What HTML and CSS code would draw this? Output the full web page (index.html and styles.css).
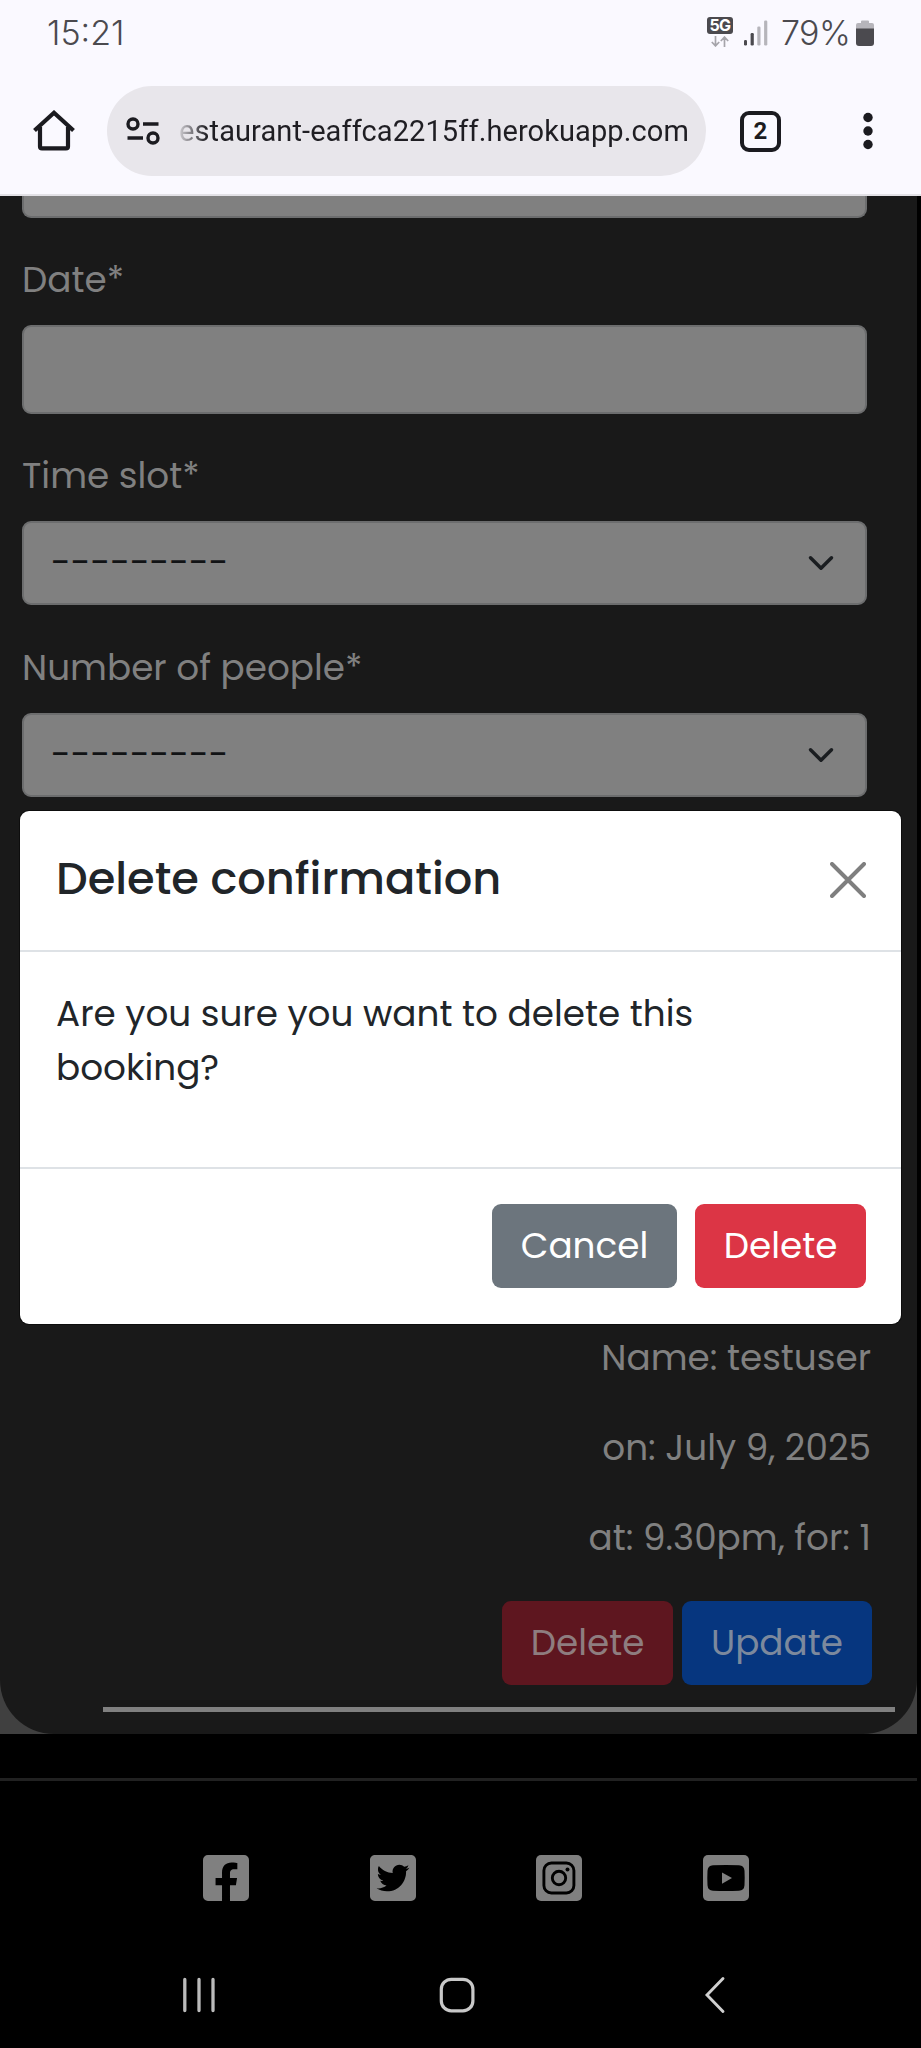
FILE: index.html
```html
<!DOCTYPE html>
<html lang="en">
<head>
<meta charset="utf-8">
<title>Bookings</title>
<link rel="stylesheet" href="styles.css">
</head>
<body>
<div class="phone">
  <header class="chrome">
    <div class="status">
      <span class="clock">15:21</span>
      <div class="status-right">
        <div class="net">
          <span class="net-badge">5G</span>
          <svg width="18" height="11" viewBox="0 0 18 11" fill="none" stroke="#a5a4aa" stroke-width="1.7"><path d="M4.500 0v9.600M.8 6l3.700 3.900L8.200 6M13.500 11V1.400M9.800 5l3.700-3.900L17.200 5"/></svg>
        </div>
        <svg class="bars" width="24" height="26" viewBox="0 0 24 26"><g fill="#4b4a4f"><rect y="20" width="3" height="5.500" rx="1.200"/><rect x="6.600" y="13" width="3.200" height="12.500" rx="1.200"/></g><g fill="#b6b5bb"><rect x="13.300" y="6.500" width="3.200" height="19" rx="1.200"/><rect x="20.100" y=".5" width="3.200" height="25" rx="1.200"/></g></svg>
        <span class="percent">79%</span>
        <svg class="battery" width="18" height="27" viewBox="0 0 18 27"><path d="M5 3V1.500Q5 .5 6 .5h6q1 0 1 1V3h3q2 0 2 2v4H0V5q0-2 2-2z" fill="#b6b5bb"/><path d="M0 8.500h18V23q0 3-3 3H3q-3 0-3-3z" fill="#4b4a4f"/></svg>
      </div>
    </div>
    <div class="toolbar">
      <svg class="home" width="42" height="42" viewBox="0 0 42 42" fill="none" stroke="#1b1b20" stroke-width="4.200"><path d="M1.500 20.500L21 2.800l19.500 17.700M7 17v19.400q0 2 2 2h24q2 0 2-2V17"/></svg>
      <div class="pill">
        <svg width="34" height="28" viewBox="0 0 34 28" fill="none" stroke="#1b1b20" stroke-width="3.400"><circle cx="7" cy="7" r="5"/><circle cx="27" cy="21" r="5"/><path d="M17 7h15.500M1.500 21H17"/></svg>
        <span class="url">estaurant-eaffca2215ff.herokuapp.com</span>
      </div>
      <span class="tabs">2</span>
      <svg class="dots" width="10" height="38" viewBox="0 0 10 38" fill="#1b1b20"><circle cx="5" cy="5.500" r="4.700"/><circle cx="5" cy="19" r="4.700"/><circle cx="5" cy="32.500" r="4.700"/></svg>
    </div>
  </header>

  <main class="page">
    <section class="panel">
      <form class="form">
        <div class="field field-cut"></div>
        <label class="label">Date*</label>
        <div class="field field-date"></div>
        <label class="label">Time slot*</label>
        <div class="field select"><span>---------</span><svg width="28" height="28" viewBox="0 0 16 16" fill="none" stroke="#1a1d20" stroke-width="2" stroke-linecap="round" stroke-linejoin="round"><path d="m2 5 6 6 6-6"/></svg></div>
        <label class="label">Number of people*</label>
        <div class="field select"><span>---------</span><svg width="28" height="28" viewBox="0 0 16 16" fill="none" stroke="#1a1d20" stroke-width="2" stroke-linecap="round" stroke-linejoin="round"><path d="m2 5 6 6 6-6"/></svg></div>
      </form>
      <div class="booking">
        <p>Name: testuser</p>
        <p>on: July 9, 2025</p>
        <p>at: 9.30pm, for: 1</p>
        <div class="actions">
          <span class="btn btn-delete dim-red">Delete</span>
          <span class="btn btn-update">Update</span>
        </div>
      </div>
      <hr class="rule">
    </section>
  </main>

  <footer class="footer">
    <div class="social">
      <svg viewBox="0 32 448 448"><path fill="#808080" d="M400 32H48A48 48 0 0 0 0 80v352a48 48 0 0 0 48 48h137.250V327.690h-63V256h63v-54.640c0-62.150 37-96.480 93.670-96.480 27.140 0 55.520 4.840 55.520 4.840v61h-31.270c-30.810 0-40.420 19.120-40.420 38.730V256h68.780l-11 71.690h-57.780V480H400a48 48 0 0 0 48-48V80a48 48 0 0 0-48-48z"/></svg>
      <svg viewBox="0 32 448 448"><path fill="#808080" d="M400 32H48C21.500 32 0 53.500 0 80v352c0 26.500 21.500 48 48 48h352c26.500 0 48-21.500 48-48V80c0-26.500-21.500-48-48-48zm-48.900 158.800c.2 2.800.2 5.700.2 8.500 0 86.700-66 186.600-186.600 186.600-37.200 0-71.700-10.800-100.700-29.400 5.300.6 10.400.8 15.800.8 30.700 0 58.900-10.400 81.400-28-28.800-.6-53-19.500-61.300-45.500 10.100 1.500 19.200 1.500 29.600-1.200-30-6.100-52.500-32.500-52.500-64.400v-.8c8.700 4.900 18.900 7.900 29.600 8.300a65.447 65.447 0 0 1-29.200-54.600c0-12.200 3.200-23.400 8.900-33.100 32.300 39.800 80.800 65.800 135.200 68.600-9.300-44.500 24-80.600 64-80.600 18.900 0 35.900 7.900 47.900 20.700 14.800-2.800 29-8.300 41.600-15.800-4.900 15.200-15.200 28-28.800 36.100 13.200-1.400 26-5.100 37.800-10.200-8.900 13.100-20.100 24.700-32.900 34z"/></svg>
      <svg viewBox="0 0 46 46"><rect width="46" height="46" rx="5" fill="#808080"/><g fill="none" stroke="#000" stroke-width="2.900"><rect x="7.900" y="8" width="30" height="30" rx="7.500"/><circle cx="23" cy="23" r="6.700"/></g><circle cx="31.500" cy="14.400" r="2"/></svg>
      <svg viewBox="0 0 46 46"><rect width="46" height="46" rx="5" fill="#808080"/><path d="M10 10.300q13-.6 26 0 5.200.3 5.500 5.500.4 7.200 0 14.400-.3 5.200-5.500 5.500-13 .6-26 0-5.200-.3-5.500-5.500-.4-7.200 0-14.400.3-5.200 5.500-5.500z"/><path d="M19 17.500v11.200l10-5.600z" fill="#808080"/></svg>
    </div>
    <nav class="sysnav">
      <svg width="38" height="36" viewBox="0 0 38 36" fill="none" stroke="#bbb" stroke-width="3.300" stroke-linecap="round"><path d="M4.800 2.500v31M19 2.500v31M33 2.500v31"/></svg>
      <svg class="nav-home" width="38" height="38" viewBox="0 0 38 38" fill="none" stroke="#c8c8c8" stroke-width="3.200"><rect x="3.300" y="3.300" width="31.600" height="31.600" rx="10"/></svg>
      <svg width="22" height="38" viewBox="0 0 22 38" fill="none" stroke="#d0d0d0" stroke-width="2.900" stroke-linecap="round"><path d="M19 2.500L3 19l16 16.500"/></svg>
    </nav>
  </footer>

  <div class="modal" role="dialog">
    <div class="modal-header">
      <h5 class="modal-title">Delete confirmation</h5>
      <svg width="36" height="36" viewBox="0 0 36 36" stroke="#7f7f7f" stroke-width="4" stroke-linecap="round"><path d="M2 2l32 32M34 2L2 34"/></svg>
    </div>
    <div class="modal-body">Are you sure you want to delete this booking?</div>
    <div class="modal-footer">
      <span class="btn btn-cancel">Cancel</span>
      <span class="btn btn-delete">Delete</span>
    </div>
  </div>
</div>
</body>
</html>
```
FILE: styles.css
```css
* { box-sizing: border-box; }
body { margin: 0; background: #000; font: 400 35.8px/54px Poppins, Inter, sans-serif; }
svg { display: block; flex: none; }
.phone { position: relative; width: 921px; height: 2048px; overflow: hidden; display: flex; flex-direction: column; }

.chrome { height: 196px; background: #faf9ff; border-bottom: 2px solid #e2e1e6; flex: none; }
.status { height: 68px; padding: 0 47px 0 47px; display: flex; justify-content: space-between; color: #4b4a4f; }
.clock { font: 350 34px/66px Inter, sans-serif; }
.status-right { display: flex; align-items: flex-start; }
.net { width: 26px; padding-top: 17px; display: flex; flex-direction: column; align-items: center; gap: 2px; }
.net-badge { width: 26px; height: 17px; border-radius: 3px; background: #4b4a4f; color: #fff; font: 700 16px/17px Inter, sans-serif; text-align: center; letter-spacing: -.5px; }
.bars { margin: 20px 0 0 11px; }
.percent { width: 86px; padding-left: 13px; font: 350 34px/66px Inter, sans-serif; letter-spacing: -.6px; }
.battery { margin: 20px 0 0 2px; }

.toolbar { padding: 18px 48px 0 33px; display: flex; align-items: center; }
.pill { width: 599px; height: 90px; margin-left: 32px; border-radius: 45px; background: #e8e6eb; display: flex; align-items: center; padding-left: 19px; }
.url { margin-left: 13px; padding-left: 6px; font: 400 29px/60px Roboto, sans-serif; letter-spacing: .1px; white-space: nowrap; color: transparent; background: linear-gradient(90deg, #e8e6eb 2px, #1f1e23 34px); -webkit-background-clip: text; background-clip: text; }
.tabs { width: 41px; height: 41px; margin-left: 34px; border: 4px solid #1b1b20; border-radius: 9px; color: #1b1b20; font: 700 24px/33px Roboto, sans-serif; text-align: center; }
.dots { margin-left: auto; }

.page { width: 917px; height: 1538px; background: #404040; flex: none; }
.panel { height: 1538px; background: #191919; border-radius: 0 0 54px 54px; color: #808080; display: flex; flex-direction: column; }
.form { padding: 0 50px 0 22px; display: flex; flex-direction: column; height: 601px; }
.field { background: #808080; border: 2px solid #6c6d6e; border-radius: 9px; }
.field-cut { height: 22px; border-top: 0; border-radius: 0 0 9px 9px; }
.label { margin-top: 35px; }
.field-date { height: 89px; margin-top: 18px; }
.label + .select { margin-top: 18px; }
.select { height: 84px; padding: 0 30px 0 27px; display: flex; align-items: center; justify-content: space-between; color: #111315; }
.select + .label { margin-top: 35.5px; }

.booking { margin-top: 534px; padding-right: 46px; text-align: right; }
.booking p { margin: 0 0 36px; }
.actions { margin-right: -1px; display: flex; justify-content: flex-end; gap: 9px; }
.btn { height: 84px; border-radius: 9px; color: #fff; line-height: 83px; text-align: center; }
.btn-cancel { width: 185px; background: #6c757d; }
.btn-delete { width: 171px; background: #dc3545; }
.dim-red { background: #5e161f; color: #8e7d7f; }
.btn-update { width: 190px; background: #06367f; color: #7c899d; }
.rule { width: 792px; height: 5px; margin: 22px 0 0 103px; border: 0; background: #808080; }

.footer { width: 917px; padding-top: 44px; background: #000; }
.social { border-top: 3px solid #212121; padding: 74px 168px 0 203px; display: flex; justify-content: space-between; }
.social svg { width: 46px; height: 46px; }
.sysnav { display: flex; justify-content: space-between; align-items: center; padding: 75px 191px 0 180px; }
.nav-home { margin-left: -8px; }

.modal { position: absolute; left: 20px; top: 811px; width: 881px; height: 513px; border-radius: 9px; background: #fff; color: #212529; box-shadow: 0 0 0 1px #0d0d0d; }
.modal-header { height: 141px; padding: 0 35px 2px 36px; border-bottom: 2px solid #dee2e6; display: flex; align-items: center; justify-content: space-between; }
.modal-title { margin: 0; padding-bottom: 2px; font-size: 44.7px; font-weight: 500; }
.modal-body { height: 215px; padding: 35px 120px 0 36px; }
.modal-footer { height: 157px; padding: 35px 35px 0; border-top: 2px solid #dee2e6; display: flex; justify-content: flex-end; gap: 18px; }
```
